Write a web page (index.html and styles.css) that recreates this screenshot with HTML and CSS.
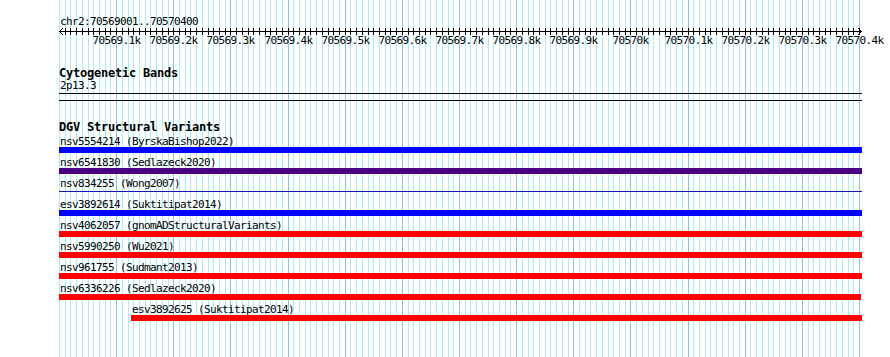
FILE: index.html
```html
<!DOCTYPE html>
<html lang="en">
  <head>
    <meta charset="UTF-8" />
    <meta name="viewport" content="width=device-width, initial-scale=1.0" />
    <title>DGV Structural Variants</title>
    <link rel="stylesheet" href="styles.css">
  </head>

  <body>
    <div id="browser">
      <svg id="grid" width="890" height="357"></svg>

      <div class="track-name ruler-name">chr2:70569001..70570400</div>
      <svg id="ruler" width="890" height="18"></svg>

      <div class="track-title">Cytogenetic Bands</div>
      <div class="track-name">2p13.3</div>
      <div class="band-line"></div>
      <div class="band-line second"></div>

      <div class="track-title dgv">DGV Structural Variants</div>
      <div class="feature">
        <div class="feature-label">nsv5554214 (ByrskaBishop2022)</div>
        <div class="bar blue"></div>
      </div>
      <div class="feature">
        <div class="feature-label">nsv6541830 (Sedlazeck2020)</div>
        <div class="bar purple"></div>
      </div>
      <div class="feature">
        <div class="feature-label">nsv834255 (Wong2007)</div>
        <div class="bar thin"></div>
      </div>
      <div class="feature">
        <div class="feature-label">esv3892614 (Suktitipat2014)</div>
        <div class="bar blue"></div>
      </div>
      <div class="feature">
        <div class="feature-label">nsv4062057 (gnomADStructuralVariants)</div>
        <div class="bar red"></div>
      </div>
      <div class="feature">
        <div class="feature-label">nsv5990250 (Wu2021)</div>
        <div class="bar red"></div>
      </div>
      <div class="feature">
        <div class="feature-label">nsv961755 (Sudmant2013)</div>
        <div class="bar red"></div>
      </div>
      <div class="feature">
        <div class="feature-label">nsv6336226 (Sedlazeck2020)</div>
        <div class="bar red" style="width: 802px"></div>
      </div>
      <div class="feature" style="padding-left: 131px">
        <div class="feature-label">esv3892625 (Suktitipat2014)</div>
        <div class="bar red" style="width: 731px"></div>
      </div>
    </div>

    <script>
      const NS = 'http://www.w3.org/2000/svg';
      const grid = document.getElementById('grid');
      const ruler = document.getElementById('ruler');

      // 10bp per step, 140 steps across the panel
      function xAt(i) {
        return Math.round(59 + i * 5.714) + 0.5;
      }

      function make(tag, attrs, parent) {
        const el = document.createElementNS(NS, tag);
        for (const key in attrs) {
          el.setAttribute(key, attrs[key]);
        }
        parent.appendChild(el);
        return el;
      }

      for (let i = 0; i <= 140; i++) {
        const x = xAt(i);
        const major = i % 10 === 0 && i > 0;
        make('line', {
          x1: x, x2: x, y1: 0, y2: 357,
          class: major ? 'grid-major' : 'grid-minor',
        }, grid);
      }

      make('line', { x1: 59, x2: 862, y1: 3.5, y2: 3.5, class: 'ruler-line' }, ruler);
      make('polyline', { points: '63,0 59.5,3.5 63,7', class: 'ruler-line' }, ruler);
      make('polyline', { points: '858,0 861.5,3.5 858,7', class: 'ruler-line' }, ruler);

      for (let i = 1; i <= 140; i++) {
        const x = xAt(i);
        make('line', { x1: x, x2: x, y1: 0, y2: 7, class: 'ruler-line' }, ruler);
        if (i % 10 === 0) {
          let label;
          if (i % 100 === 0) {
            label = (70569 + i / 100) + 'k';
          } else {
            label = (70569 + i / 100).toFixed(1) + 'k';
          }
          const text = make('text', { x: x, y: 15.5, class: 'ruler-label' }, ruler);
          text.textContent = label;
        }
      }
    </script>
  </body>
</html>
```

FILE: styles.css
```css
body {
  margin: 0;
  background-color: white;
}

#browser {
  position: relative;
  z-index: 0;
  width: 890px;
  height: 357px;
  overflow: hidden;
  background-color: white;
  font-family: "DejaVu Sans Mono", "Liberation Mono", monospace;
  font-size: 11px;
  letter-spacing: -0.62px;
  color: black;
}

#grid {
  position: absolute;
  top: 0;
  left: 0;
  z-index: -1;
}

.grid-minor {
  stroke: #aaeef0;
  stroke-width: 1;
  shape-rendering: crispEdges;
}

.grid-major {
  stroke: #88c2e6;
  stroke-width: 1;
  shape-rendering: crispEdges;
}

#ruler {
  display: block;
  overflow: visible;
}

.ruler-line {
  stroke: black;
  stroke-width: 1;
  fill: none;
  shape-rendering: crispEdges;
}

.ruler-label {
  font-family: "DejaVu Sans Mono", "Liberation Mono", monospace;
  font-size: 11px;
  letter-spacing: -0.62px;
  text-anchor: middle;
  fill: black;
}

.track-name {
  padding-left: 60px;
  height: 13px;
  line-height: 13px;
  white-space: pre;
}

.ruler-name {
  margin-top: 15px;
}

.track-title {
  padding-left: 59px;
  margin-top: 21px;
  height: 12px;
  line-height: 12px;
  font-size: 12px;
  letter-spacing: -0.22px;
  font-weight: bold;
  white-space: pre;
}

.track-title.dgv {
  margin-top: 20px;
  margin-bottom: 3px;
}

.band-line {
  margin-top: 1px;
  margin-left: 59px;
  width: 803px;
  height: 1px;
  background-color: black;
}

.band-line.second {
  margin-top: 6px;
}

.feature {
  padding-left: 59px;
  margin-bottom: 4px;
}

.feature-label {
  height: 11px;
  line-height: 11px;
  padding-left: 1px;
  white-space: pre;
}

.bar {
  width: 803px;
  height: 6px;
}

.bar.blue {
  background-color: #0000ff;
}

.bar.purple {
  background-color: #4b0082;
}

.bar.red {
  background-color: #ff0000;
}

.bar.thin {
  background: linear-gradient(to bottom, transparent 2px, #1414b4 2px, #1414b4 3px, transparent 3px);
}
```
